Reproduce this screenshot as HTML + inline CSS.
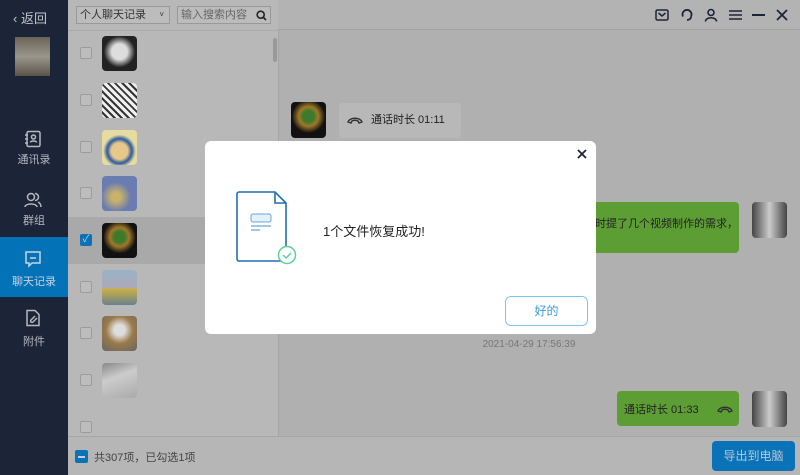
<!DOCTYPE html>
<html><head><meta charset="utf-8"><style>
*{margin:0;padding:0;box-sizing:border-box}
body{width:800px;height:475px;overflow:hidden;position:relative;font-family:"Liberation Sans","Noto Sans CJK SC",sans-serif;background:#b1b1b1}
.abs{position:absolute}
.side{left:0;top:0;width:68px;height:475px;background:#1c2437}
.side .t{color:#b4b8c0;font-size:11px;width:68px;text-align:center}
.list{left:68px;top:0;width:210px;height:436px;background:#b8b8b8}
.row{position:absolute;left:0;width:210px;height:47px}
.cb{position:absolute;left:12px;width:12px;height:12px;border:1px solid #9c9c9c;background:#bdbdbd;border-radius:2px}
.av{position:absolute;left:34px;width:35px;height:35px;border-radius:4px}
.bottom{left:68px;top:436px;width:732px;height:39px;background:#b6b6b6;border-top:1px solid #a6a6a6}
.chat{left:278px;top:0;width:522px;height:436px;background:#b0b0b0;border-left:1px solid #a5a5a5}
.hdr{left:278px;top:0;width:522px;height:30px;background:#b3b3b3;border-bottom:1px solid #a3a3a3}
.dlg{left:205px;top:141px;width:391px;height:193px;background:#fff;border-radius:6px}
</style></head><body>
<div class="abs side">
 <div class="abs t" style="top:8px;left:-4px;font-size:13px;color:#c2c6cc">&#x2039; 返回</div>
 <div class="abs" style="left:15px;top:37px;width:35px;height:39px;background:linear-gradient(#6a6458,#9a968c 50%,#5a5448)"></div>
 <svg class="abs" style="left:24px;top:130px" width="18" height="18" viewBox="0 0 18 18" fill="none" stroke="#b4b8c0" stroke-width="1.5"><rect x="3" y="1.5" width="13" height="15" rx="1.5"/><circle cx="9.5" cy="7" r="2"/><path d="M6.5 12.5c0-2 6-2 6 0M1 5h3M1 9h3M1 13h3"/></svg>
 <div class="abs t" style="top:151px">通讯录</div>
 <svg class="abs" style="left:24px;top:191px" width="18" height="18" viewBox="0 0 18 18" fill="none" stroke="#b4b8c0" stroke-width="1.5"><circle cx="7" cy="6" r="3.5"/><path d="M1 16c0-4 12-4 12 0M11 2.5a3.5 3.5 0 010 7M14 11c2 1 3 3 3 5"/></svg>
 <div class="abs t" style="top:212px">群组</div>
 <div class="abs" style="left:0;top:237px;width:68px;height:60px;background:#0472b6"></div>
 <svg class="abs" style="left:24px;top:250px" width="18" height="18" viewBox="0 0 18 18" fill="none" stroke="#c8d4de" stroke-width="1.5"><path d="M2 2h14v11H8l-3 3v-3H2z"/><path d="M6 8h6"/></svg>
 <div class="abs t" style="top:273px;color:#c8d4de">聊天记录</div>
 <svg class="abs" style="left:24px;top:309px" width="18" height="18" viewBox="0 0 18 18" fill="none" stroke="#b4b8c0" stroke-width="1.5"><path d="M3 1.5h8l4 4v11H3z"/><path d="M11 7l-4 4a1.4 1.4 0 002 2l4-4"/></svg>
 <div class="abs t" style="top:333px">附件</div>
</div>
<div class="abs list">
 <div class="abs" style="left:8px;top:6px;width:94px;height:18px;border:1px solid #999;background:#bcbcbc;font-size:11px;padding-left:3px;line-height:16px;color:#333">个人聊天记录<span style="position:absolute;right:5px;font-size:8px">&#x2c5;</span></div>
 <div class="abs" style="left:109px;top:6px;width:94px;height:18px;border:1px solid #999;background:#bcbcbc;font-size:11px;padding-left:3px;line-height:16px;color:#666">输入搜索内容<svg style="position:absolute;right:3px;top:3px" width="11" height="11" viewBox="0 0 11 11" fill="none" stroke="#222" stroke-width="1.6"><circle cx="4.7" cy="4.7" r="3.5"/><path d="M7.3 7.3L10 10"/></svg></div>
 <div class="abs" style="left:0;top:30px;width:210px;height:1px;background:#aaa"></div>
 <div class="abs" style="left:205px;top:38px;width:4px;height:24px;background:#999;border-radius:2px"></div>
 <div class="row" style="top:30px"><div class="cb" style="top:17px"></div><div class="av" style="top:6px;background:radial-gradient(circle at 50% 45%,#ddd 30%,#222 60%)"></div></div>
 <div class="row" style="top:77px"><div class="cb" style="top:17px"></div><div class="av" style="top:6px;background:repeating-linear-gradient(45deg,#eee 0 3px,#333 3px 5px)"></div></div>
 <div class="row" style="top:124px"><div class="cb" style="top:17px"></div><div class="av" style="top:6px;background:radial-gradient(circle at 50% 60%,#e8c88a 30%,#2c5aa0 45%,#e6dca0 60%)"></div></div>
 <div class="row" style="top:170px"><div class="cb" style="top:17px"></div><div class="av" style="top:6px;background:radial-gradient(circle at 40% 60%,#c9b26a 15%,#6a7cb0 50%)"></div></div>
 <div class="row" style="top:217px;background:#a9a9a9"><div class="cb" style="top:17px;background:#0a72b6;border-color:#0a72b6;color:#ccc;font-size:10px;line-height:10px;text-align:center">&#x2713;</div><div class="av" style="top:6px;background:radial-gradient(circle at 50% 40%,#3d7a2a 20%,#a0782a 35%,#111 60%)"></div></div>
 <div class="row" style="top:264px"><div class="cb" style="top:17px"></div><div class="av" style="top:6px;background:linear-gradient(#9ab2c4,#aab 50%,#c8b040 55%,#6a8090)"></div></div>
 <div class="row" style="top:310px"><div class="cb" style="top:17px"></div><div class="av" style="top:6px;background:radial-gradient(circle at 50% 40%,#ddd 20%,#9a7a4a 50%,#666)"></div></div>
 <div class="row" style="top:357px"><div class="cb" style="top:17px"></div><div class="av" style="top:6px;background:linear-gradient(160deg,#888,#ccc 40%,#aaa)"></div></div>
 <div class="row" style="top:404px"><div class="cb" style="top:17px"></div></div>
</div>
<div class="abs chat">
 <div class="abs" style="left:12px;top:102px;width:35px;height:36px;border-radius:4px;background:radial-gradient(circle at 50% 40%,#3d7a2a 20%,#a0782a 35%,#111 60%)"></div>
 <div class="abs" style="left:60px;top:103px;width:122px;height:35px;background:#b8b8b8;border-radius:4px;font-size:11px;line-height:35px;color:#222;padding-left:32px">通话时长 01:11
  <svg style="position:absolute;left:8px;top:12px" width="16" height="10" viewBox="0 0 16 10" fill="none" stroke="#333" stroke-width="1.4"><path d="M1 7c2-5 12-5 14 0l-3 1-1-2c-2-1-4-1-6 0l-1 2z"/></svg></div>
 <div class="abs" style="left:286px;top:202px;width:174px;height:51px;background:#5c9e34;border-radius:4px;font-size:11px;color:#222;padding:13px 0 0 30px">时提了几个视频制作的需求，</div>
 <div class="abs" style="left:473px;top:202px;width:35px;height:36px;border-radius:4px;background:linear-gradient(90deg,#444,#ccc 50%,#444)"></div>
 <div class="abs" style="left:160px;top:339px;width:180px;font-size:10px;color:#777;text-align:center">2021-04-29 17:56:39</div>
 <div class="abs" style="left:338px;top:391px;width:122px;height:35px;background:#5c9e34;border-radius:4px;font-size:11px;line-height:38px;color:#222;padding-left:7px">通话时长 01:33
  <svg style="position:absolute;right:6px;top:13px" width="16" height="10" viewBox="0 0 16 10" fill="none" stroke="#333" stroke-width="1.4"><path d="M1 7c2-5 12-5 14 0l-3 1-1-2c-2-1-4-1-6 0l-1 2z"/></svg></div>
 <div class="abs" style="left:473px;top:391px;width:35px;height:36px;border-radius:4px;background:linear-gradient(90deg,#444,#ccc 50%,#444)"></div>
</div>
<div class="abs hdr">
 <svg class="abs" style="left:377px;top:9px" width="14" height="12" viewBox="0 0 14 12" fill="none" stroke="#1c2437" stroke-width="1.5"><rect x="1" y="1" width="12" height="10" rx="1.5"/><path d="M3.5 4l3.5 3 3.5-3"/></svg>
 <svg class="abs" style="left:402px;top:8px" width="14" height="14" viewBox="0 0 14 14" fill="none" stroke="#1c2437" stroke-width="1.8"><path d="M3 8.5A4.5 4.5 0 1111 8.5M11 8.5c0 2-1.5 3.5-4 3.5"/></svg>
 <svg class="abs" style="left:426px;top:8px" width="14" height="14" viewBox="0 0 14 14" fill="none" stroke="#1c2437" stroke-width="1.6"><circle cx="7" cy="4.5" r="3"/><path d="M1.5 13.5c0-5 11-5 11 0"/></svg>
 <svg class="abs" style="left:451px;top:9px" width="13" height="12" viewBox="0 0 13 12" stroke="#1c2437" stroke-width="1.6"><path d="M0 2h13M0 6h13M0 10h13"/></svg>
 <svg class="abs" style="left:474px;top:14px" width="13" height="2" viewBox="0 0 13 2" stroke="#1c2437" stroke-width="2"><path d="M0 1h13"/></svg>
 <svg class="abs" style="left:498px;top:9px" width="12" height="12" viewBox="0 0 12 12" stroke="#1c2437" stroke-width="1.8"><path d="M1 1l10 10M11 1L1 11"/></svg>
</div>
<div class="abs bottom">
 <div class="abs" style="left:7px;top:13px;width:13px;height:13px;background:#0a72b6;border-radius:2px"><div style="position:absolute;left:3px;top:6px;width:7px;height:1.5px;background:#ccc"></div></div>
 <div class="abs" style="left:26px;top:12px;font-size:11px;color:#444">共307项，已勾选1项</div>
 <div class="abs" style="left:644px;top:4px;width:83px;height:30px;background:#0a72b6;border-radius:4px;color:#b8c8d6;font-size:12px;line-height:30px;text-align:center">导出到电脑</div>
</div>
<div class="abs dlg">
 <svg class="abs" style="left:371px;top:7px" width="12" height="12" viewBox="0 0 12 12" stroke="#1c2437" stroke-width="1.8"><path d="M2 2l8 8M10 2L2 10"/></svg>
 <svg class="abs" style="left:30px;top:50px" width="66" height="76" viewBox="0 0 66 76" fill="none">
  <path d="M4 1h36l11 11v58H4a2 2 0 01-2-2V3a2 2 0 012-2z" stroke="#1f6fb2" stroke-width="1.6" fill="#fff"/>
  <path d="M40 1v11h11" stroke="#1f6fb2" stroke-width="1.6"/>
  <rect x="16" y="23" width="20" height="8" rx="2" fill="#e3f1fd" stroke="#6aa6d8" stroke-width="1"/>
  <path d="M16 35h20M16 39h9" stroke="#6aa6d8" stroke-width="1.3"/>
  <circle cx="52" cy="64" r="8.5" fill="#fff" stroke="#5cd29a" stroke-width="1.5"/>
  <path d="M48 64l3 3 5-5" stroke="#5cd29a" stroke-width="1.5"/>
 </svg>
 <div class="abs" style="left:118px;top:80px;font-size:13px;color:#222">1个文件恢复成功!</div>
 <div class="abs" style="left:300px;top:155px;width:83px;height:30px;border:1px solid #7cc4f4;border-radius:6px;color:#3a9be0;font-size:12px;line-height:28px;text-align:center">好的</div>
</div>
</body></html>
